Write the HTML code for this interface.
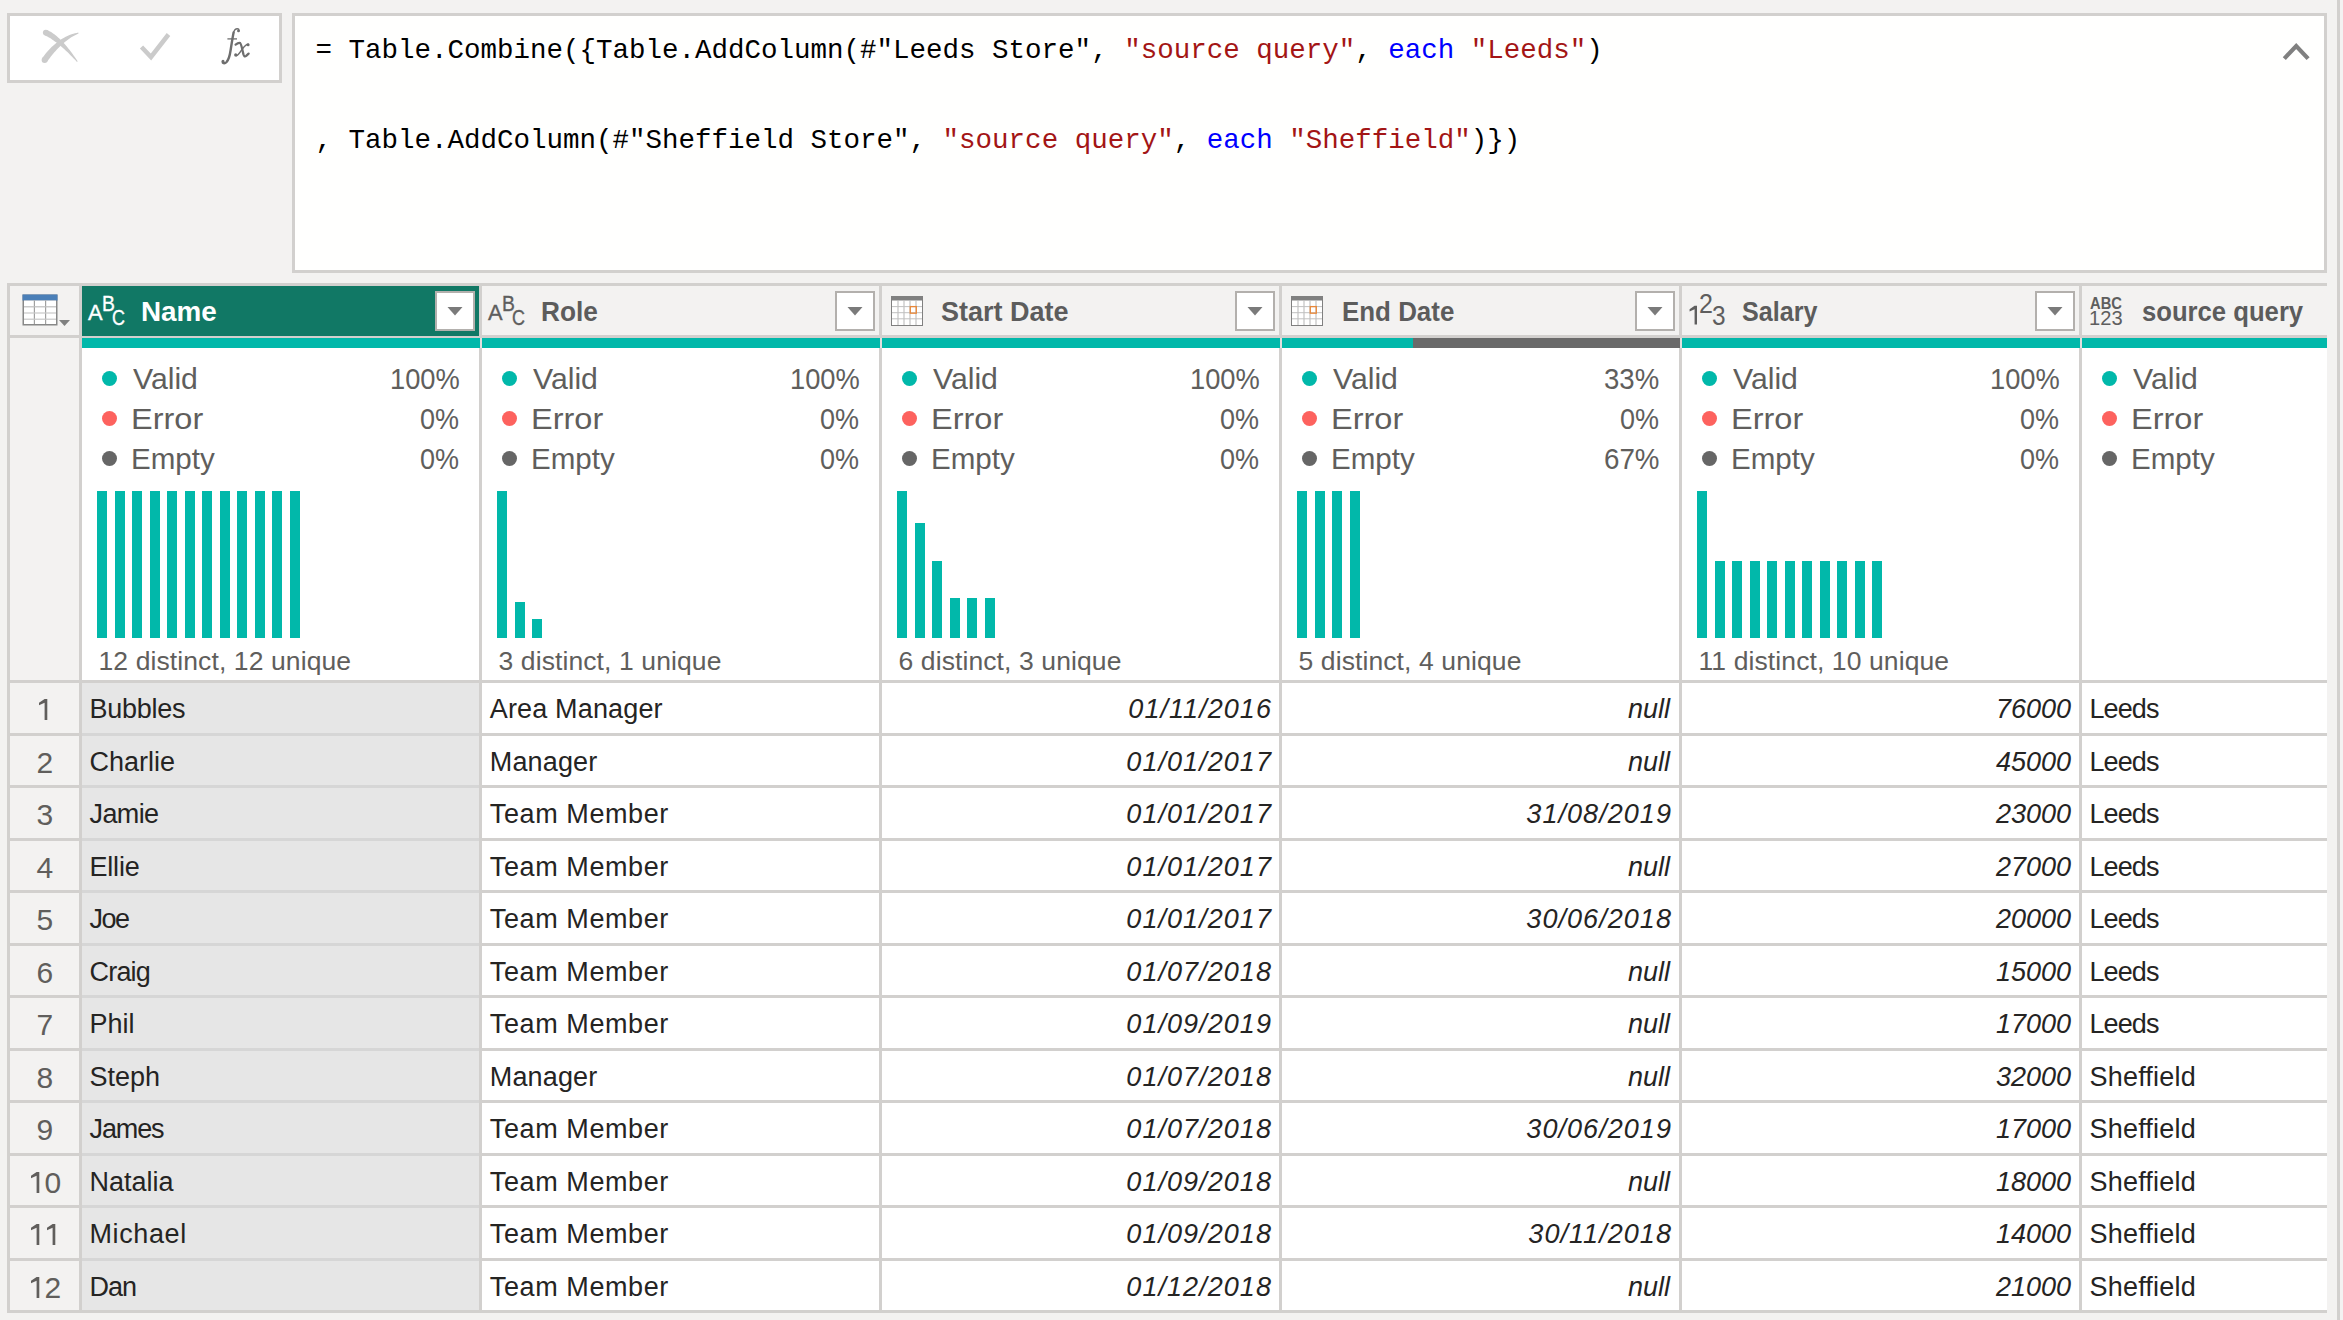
<!DOCTYPE html>
<html><head><meta charset="utf-8">
<style>
html,body{margin:0;padding:0;}
body{width:2343px;height:1320px;background:#f3f2f1;position:relative;overflow:hidden;font-family:'Liberation Sans', sans-serif;}
body div, body span, body svg{position:absolute;}
span{line-height:0;white-space:pre;}
i{font-style:normal;}
</style></head><body>
<div style="left:7px;top:13px;width:269px;height:64px;border:3px solid #d2d0ce;background:#fff;"></div>
<svg style="left:0;top:0" width="100" height="80" viewBox="0 0 100 80"><path d="M44.64 35.26 L45.66 35.72 L46.70 36.24 L47.78 36.80 L48.88 37.43 L50.02 38.11 L51.18 38.84 L52.38 39.63 L53.60 40.48 L54.85 41.38 L56.13 42.34 L57.44 43.36 L58.78 44.43 L60.14 45.57 L61.53 46.76 L62.95 48.01 L64.40 49.32 L65.87 50.68 L67.38 52.11 L68.90 53.59 L70.46 55.13 L72.04 56.73 L73.65 58.39 L75.28 60.10 L76.95 61.88 L77.65 61.32 L76.30 59.29 L74.95 57.32 L73.61 55.41 L72.28 53.57 L70.95 51.79 L69.64 50.07 L68.33 48.41 L67.02 46.82 L65.73 45.29 L64.44 43.82 L63.15 42.41 L61.87 41.07 L60.60 39.79 L59.34 38.57 L58.08 37.42 L56.82 36.32 L55.57 35.30 L54.33 34.34 L53.09 33.44 L51.86 32.61 L50.62 31.84 L49.40 31.14 L48.18 30.51 L46.96 29.94Z" fill="#cbcbcb"/><circle cx="45.8" cy="32.6" r="2.9" fill="#cbcbcb"/><path d="M78.27 32.57 L76.61 32.90 L74.96 33.29 L73.32 33.75 L71.68 34.27 L70.05 34.86 L68.44 35.52 L66.83 36.25 L65.23 37.04 L63.65 37.89 L62.09 38.82 L60.54 39.80 L59.00 40.85 L57.48 41.97 L55.98 43.15 L54.51 44.39 L53.05 45.69 L51.61 47.05 L50.19 48.48 L48.79 49.96 L47.42 51.51 L46.07 53.11 L44.74 54.78 L43.43 56.50 L42.15 58.27 L47.05 61.73 L48.26 60.04 L49.47 58.40 L50.69 56.81 L51.91 55.27 L53.14 53.77 L54.37 52.32 L55.62 50.91 L56.87 49.55 L58.12 48.24 L59.39 46.96 L60.66 45.73 L61.95 44.55 L63.25 43.40 L64.55 42.29 L65.88 41.23 L67.21 40.21 L68.56 39.22 L69.93 38.28 L71.31 37.37 L72.71 36.50 L74.13 35.68 L75.58 34.89 L77.04 34.14 L78.53 33.43Z" fill="#cbcbcb"/><circle cx="44.6" cy="60.0" r="3.0" fill="#cbcbcb"/></svg>
<svg style="left:138px;top:30px" width="36" height="32" viewBox="0 0 36 32">
<path d="M3.5 17 L13 27 L30.5 4.5" stroke="#cbcbcb" stroke-width="4.5" fill="none"/>
</svg>
<svg style="left:210px;top:20px" width="50" height="50" viewBox="210 20 50 50" fill="none" stroke="#6e6e6e" stroke-linecap="round">
<path d="M233.6 32.5 C232.8 36, 231.6 44, 230.6 50.3 C229.9 55, 228.9 59.5, 226.6 62 C225.3 63.3, 223.9 63.5, 222.9 62.8" stroke-width="2.4"/>
<path d="M233.6 32.5 C234.3 30, 235.6 28.7, 237.3 28.7 C238.3 28.7, 239 29.3, 239 30.3" stroke-width="1.4"/>
<circle cx="238.5" cy="30.9" r="1.45" fill="#6e6e6e" stroke="none"/>
<circle cx="223" cy="61.4" r="1.55" fill="#6e6e6e" stroke="none"/>
<path d="M227.4 38.9 L237.0 38.9" stroke-width="1.3" stroke-linecap="butt"/>
<path d="M235.6 44.6 C237.3 43.3, 239.3 42.6, 240.2 43.1 C241 43.7, 242.5 50, 243.4 54.3 C243.9 56.2, 244.8 56.9, 246.2 55.9 L248.6 53.6" stroke-width="2.3"/>
<path d="M248.2 44.3 C246.4 44.3, 244.4 46.1, 241.9 49.6 C239.9 52.6, 238 55.4, 236.2 55.8" stroke-width="1.5"/>
<circle cx="248.1" cy="44.7" r="1.5" fill="#6e6e6e" stroke="none"/>
<circle cx="235.7" cy="54.9" r="1.6" fill="#6e6e6e" stroke="none"/>
</svg>
<div style="left:292px;top:13px;width:2029px;height:254px;border:3px solid #d2d0ce;background:#fffffe;"></div>
<svg style="left:2280px;top:38px" width="32" height="26" viewBox="0 0 32 26">
<path d="M4.3 20.6 L16.2 8 L28.1 20.6" stroke="#808080" stroke-width="4.2" fill="none"/>
</svg>
<div style="left:2337px;top:0px;width:3px;height:1320px;background:#d2d0ce;"></div>
<span style="left:315.5px;top:50.68px;font-size:27.5px;font-family:'Liberation Mono', monospace;"><i style="color:#000000">= Table.Combine({Table.AddColumn(#&quot;Leeds Store&quot;, </i><i style="color:#a31515">&quot;source query&quot;</i><i style="color:#000000">, </i><i style="color:#0000ff">each</i><i style="color:#000000"> </i><i style="color:#a31515">&quot;Leeds&quot;</i><i style="color:#000000">)</i></span>
<span style="left:315.5px;top:140.68px;font-size:27.5px;font-family:'Liberation Mono', monospace;"><i style="color:#000000">, Table.AddColumn(#&quot;Sheffield Store&quot;, </i><i style="color:#a31515">&quot;source query&quot;</i><i style="color:#000000">, </i><i style="color:#0000ff">each</i><i style="color:#000000"> </i><i style="color:#a31515">&quot;Sheffield&quot;</i><i style="color:#000000">)})</i></span>
<div style="left:7px;top:283px;width:2320px;height:3px;background:#d2d0ce;"></div>
<div style="left:7px;top:283px;width:3px;height:1030px;background:#d2d0ce;"></div>
<div style="left:7px;top:1310px;width:2320px;height:3px;background:#d2d0ce;"></div>
<div style="left:10px;top:286px;width:69px;height:49px;background:#f3f2f1;"></div>
<div style="left:10px;top:338px;width:69px;height:342px;background:#f3f2f1;"></div>
<div style="left:10px;top:335px;width:2317px;height:3px;background:#d2d0ce;"></div>
<div style="left:10px;top:680px;width:2317px;height:3px;background:#d2d0ce;"></div>
<div style="left:79px;top:286px;width:3px;height:1024px;background:#d2d0ce;"></div>
<div style="left:479px;top:286px;width:3px;height:1024px;background:#d2d0ce;"></div>
<div style="left:879px;top:286px;width:3px;height:1024px;background:#d2d0ce;"></div>
<div style="left:1279px;top:286px;width:3px;height:1024px;background:#d2d0ce;"></div>
<div style="left:1679px;top:286px;width:3px;height:1024px;background:#d2d0ce;"></div>
<div style="left:2079px;top:286px;width:3px;height:1024px;background:#d2d0ce;"></div>
<div style="left:82px;top:286px;width:397px;height:50px;background:#117865;"></div>
<span style="left:88.35px;top:312.98px;font-size:22.25px;color:#ffffff;font-weight:normal;font-style:normal;font-family:'Liberation Sans', sans-serif;transform:scaleX(0.9835);transform-origin:0 0;-webkit-text-stroke:0.35px">A</span>
<span style="left:102.00px;top:303.73px;font-size:22.11px;color:#ffffff;font-weight:normal;font-style:normal;font-family:'Liberation Sans', sans-serif;transform:scaleX(0.8749);transform-origin:0 0;-webkit-text-stroke:0.35px">B</span>
<span style="left:112.00px;top:317.79px;font-size:21.63px;color:#ffffff;font-weight:normal;font-style:normal;font-family:'Liberation Sans', sans-serif;transform:scaleX(0.8302);transform-origin:0 0;-webkit-text-stroke:0.35px">C</span>
<span style="left:140.62px;top:312.14px;font-size:27px;color:#ffffff;font-weight:bold;font-style:normal;font-family:'Liberation Sans', sans-serif;transform:scaleX(1.0310);transform-origin:0 0;">Name</span>
<div style="left:435px;top:291px;width:36px;height:36px;border:2px solid #b3b0ad;background:#fff;"></div>
<svg style="left:447px;top:306px" width="16" height="10" viewBox="0 0 16 10"><path d="M0.5 1 L15.5 1 L8 9.5 Z" fill="#7a7a7a"/></svg>
<div style="left:82px;top:338px;width:397px;height:10px;background:#01b8aa;"></div>
<div style="left:82px;top:348px;width:397px;height:332px;background:#ffffff;"></div>
<div style="left:482px;top:286px;width:397px;height:49px;background:#f3f2f1;"></div>
<span style="left:488.35px;top:312.98px;font-size:22.25px;color:#5e5e5e;font-weight:normal;font-style:normal;font-family:'Liberation Sans', sans-serif;transform:scaleX(0.9835);transform-origin:0 0;-webkit-text-stroke:0.35px">A</span>
<span style="left:502.00px;top:303.73px;font-size:22.11px;color:#5e5e5e;font-weight:normal;font-style:normal;font-family:'Liberation Sans', sans-serif;transform:scaleX(0.8749);transform-origin:0 0;-webkit-text-stroke:0.35px">B</span>
<span style="left:512.00px;top:317.79px;font-size:21.63px;color:#5e5e5e;font-weight:normal;font-style:normal;font-family:'Liberation Sans', sans-serif;transform:scaleX(0.8302);transform-origin:0 0;-webkit-text-stroke:0.35px">C</span>
<span style="left:540.83px;top:312.14px;font-size:27px;color:#5c5c5c;font-weight:bold;font-style:normal;font-family:'Liberation Sans', sans-serif;transform:scaleX(0.9721);transform-origin:0 0;">Role</span>
<div style="left:835px;top:291px;width:36px;height:36px;border:2px solid #b3b0ad;background:#fff;"></div>
<svg style="left:847px;top:306px" width="16" height="10" viewBox="0 0 16 10"><path d="M0.5 1 L15.5 1 L8 9.5 Z" fill="#7a7a7a"/></svg>
<div style="left:482px;top:338px;width:397px;height:10px;background:#01b8aa;"></div>
<div style="left:482px;top:348px;width:397px;height:332px;background:#ffffff;"></div>
<div style="left:882px;top:286px;width:397px;height:49px;background:#f3f2f1;"></div>
<svg style="left:891px;top:296px" width="32" height="30" viewBox="0 0 32 30"><rect x="0" y="0" width="32" height="30" fill="#808080"/><rect x="1" y="4.5" width="30" height="24.5" fill="#ffffff"/><rect x="6.5" y="4.5" width="1" height="24.5" fill="#b8b8b8"/><rect x="12.5" y="4.5" width="1" height="24.5" fill="#b8b8b8"/><rect x="18.5" y="4.5" width="1" height="24.5" fill="#b8b8b8"/><rect x="24.5" y="4.5" width="1" height="24.5" fill="#b8b8b8"/><rect x="1" y="10.1" width="30" height="1" fill="#c0c0c0"/><rect x="1" y="16.2" width="30" height="1" fill="#c0c0c0"/><rect x="1" y="22.3" width="30" height="1" fill="#c0c0c0"/><rect x="19.3" y="10.6" width="6" height="6.6" fill="none" stroke="#e8883a" stroke-width="1.3"/></svg>
<span style="left:941.39px;top:312.14px;font-size:27px;color:#5c5c5c;font-weight:bold;font-style:normal;font-family:'Liberation Sans', sans-serif;transform:scaleX(0.9998);transform-origin:0 0;">Start Date</span>
<div style="left:1235px;top:291px;width:36px;height:36px;border:2px solid #b3b0ad;background:#fff;"></div>
<svg style="left:1247px;top:306px" width="16" height="10" viewBox="0 0 16 10"><path d="M0.5 1 L15.5 1 L8 9.5 Z" fill="#7a7a7a"/></svg>
<div style="left:882px;top:338px;width:397px;height:10px;background:#01b8aa;"></div>
<div style="left:882px;top:348px;width:397px;height:332px;background:#ffffff;"></div>
<div style="left:1282px;top:286px;width:397px;height:49px;background:#f3f2f1;"></div>
<svg style="left:1291px;top:296px" width="32" height="30" viewBox="0 0 32 30"><rect x="0" y="0" width="32" height="30" fill="#808080"/><rect x="1" y="4.5" width="30" height="24.5" fill="#ffffff"/><rect x="6.5" y="4.5" width="1" height="24.5" fill="#b8b8b8"/><rect x="12.5" y="4.5" width="1" height="24.5" fill="#b8b8b8"/><rect x="18.5" y="4.5" width="1" height="24.5" fill="#b8b8b8"/><rect x="24.5" y="4.5" width="1" height="24.5" fill="#b8b8b8"/><rect x="1" y="10.1" width="30" height="1" fill="#c0c0c0"/><rect x="1" y="16.2" width="30" height="1" fill="#c0c0c0"/><rect x="1" y="22.3" width="30" height="1" fill="#c0c0c0"/><rect x="19.3" y="10.6" width="6" height="6.6" fill="none" stroke="#e8883a" stroke-width="1.3"/></svg>
<span style="left:1342.15px;top:312.14px;font-size:27px;color:#5c5c5c;font-weight:bold;font-style:normal;font-family:'Liberation Sans', sans-serif;transform:scaleX(0.9599);transform-origin:0 0;">End Date</span>
<div style="left:1635px;top:291px;width:36px;height:36px;border:2px solid #b3b0ad;background:#fff;"></div>
<svg style="left:1647px;top:306px" width="16" height="10" viewBox="0 0 16 10"><path d="M0.5 1 L15.5 1 L8 9.5 Z" fill="#7a7a7a"/></svg>
<div style="left:1282px;top:338px;width:131px;height:10px;background:#01b8aa;"></div>
<div style="left:1413px;top:338px;width:266px;height:10px;background:#6a6a6a;"></div>
<div style="left:1282px;top:348px;width:397px;height:332px;background:#ffffff;"></div>
<div style="left:1682px;top:286px;width:397px;height:49px;background:#f3f2f1;"></div>
<svg style="left:0;top:0" width="2343" height="340" viewBox="0 0 2343 340"><path d="M1694.58 305.80 L1697.00 305.80 L1697.00 324.60 L1694.58 324.60 L1694.58 309.20 L1689.57 311.44 L1689.57 309.20Z" fill="#5e5e5e"/></svg>
<span style="left:1699.35px;top:303.96px;font-size:27.24px;color:#5e5e5e;font-weight:normal;font-style:normal;font-family:'Liberation Sans', sans-serif;transform:scaleX(0.9198);transform-origin:0 0;">2</span>
<span style="left:1712.48px;top:316.42px;font-size:26.86px;color:#5e5e5e;font-weight:normal;font-style:normal;font-family:'Liberation Sans', sans-serif;transform:scaleX(0.9094);transform-origin:0 0;">3</span>
<span style="left:1741.95px;top:312.14px;font-size:27px;color:#5c5c5c;font-weight:bold;font-style:normal;font-family:'Liberation Sans', sans-serif;transform:scaleX(0.9298);transform-origin:0 0;">Salary</span>
<div style="left:2035px;top:291px;width:36px;height:36px;border:2px solid #b3b0ad;background:#fff;"></div>
<svg style="left:2047px;top:306px" width="16" height="10" viewBox="0 0 16 10"><path d="M0.5 1 L15.5 1 L8 9.5 Z" fill="#7a7a7a"/></svg>
<div style="left:1682px;top:338px;width:397px;height:10px;background:#01b8aa;"></div>
<div style="left:1682px;top:348px;width:397px;height:332px;background:#ffffff;"></div>
<div style="left:2082px;top:286px;width:245px;height:49px;background:#f3f2f1;"></div>
<span style="left:2090.43px;top:302.65px;font-size:16.11px;color:#5e5e5e;font-weight:bold;font-style:normal;font-family:'Liberation Sans', sans-serif;transform:scaleX(0.9155);transform-origin:0 0;">ABC</span>
<span style="left:2089.29px;top:317.69px;font-size:19.65px;color:#5e5e5e;font-weight:normal;font-style:normal;font-family:'Liberation Sans', sans-serif;transform:scaleX(1.0246);transform-origin:0 0;">123</span>
<span style="left:2141.80px;top:312.14px;font-size:27px;color:#5c5c5c;font-weight:bold;font-style:normal;font-family:'Liberation Sans', sans-serif;transform:scaleX(0.9503);transform-origin:0 0;">source query</span>
<div style="left:2082px;top:338px;width:245px;height:10px;background:#01b8aa;"></div>
<div style="left:2082px;top:348px;width:245px;height:332px;background:#ffffff;"></div>
<div style="left:479px;top:348px;width:3px;height:332px;background:#d2d0ce;"></div>
<div style="left:479px;top:338px;width:1px;height:10px;background:#01b8aa;"></div>
<div style="left:480px;top:338px;width:2px;height:10px;background:#e2dede;"></div>
<div style="left:879px;top:348px;width:3px;height:332px;background:#d2d0ce;"></div>
<div style="left:879px;top:338px;width:1px;height:10px;background:#01b8aa;"></div>
<div style="left:880px;top:338px;width:2px;height:10px;background:#e2dede;"></div>
<div style="left:1279px;top:348px;width:3px;height:332px;background:#d2d0ce;"></div>
<div style="left:1279px;top:338px;width:1px;height:10px;background:#01b8aa;"></div>
<div style="left:1280px;top:338px;width:2px;height:10px;background:#e2dede;"></div>
<div style="left:1679px;top:348px;width:3px;height:332px;background:#d2d0ce;"></div>
<div style="left:1679px;top:338px;width:1px;height:10px;background:#6a6a6a;"></div>
<div style="left:1680px;top:338px;width:2px;height:10px;background:#e2dede;"></div>
<div style="left:2079px;top:348px;width:3px;height:332px;background:#d2d0ce;"></div>
<div style="left:2079px;top:338px;width:1px;height:10px;background:#01b8aa;"></div>
<div style="left:2080px;top:338px;width:2px;height:10px;background:#e2dede;"></div>
<svg style="left:22px;top:294px" width="50" height="34" viewBox="0 0 50 34">
<rect x="0.5" y="0.5" width="35" height="31" fill="#888888"/>
<rect x="0.5" y="0.5" width="35" height="6" fill="#4a7fb8"/>
<rect x="2" y="6.5" width="32" height="23.5" fill="#ffffff"/>
<rect x="11.8" y="6.5" width="1.2" height="23.5" fill="#a0a0a0"/>
<rect x="23" y="6.5" width="1.2" height="23.5" fill="#a0a0a0"/>
<rect x="2" y="12.2" width="32" height="1.2" fill="#bdbdbd"/>
<rect x="2" y="18.4" width="32" height="1.2" fill="#c8c8c8"/>
<rect x="2" y="24.6" width="32" height="1.2" fill="#c8c8c8"/>
<path d="M37 26 L48 26 L42.5 32 Z" fill="#808080"/>
</svg>
<div style="left:102px;top:371.0px;width:15px;height:15px;border-radius:50%;background:#01b8aa;"></div>
<span style="left:132.65px;top:378.67px;font-size:29.8px;color:#605e5c;font-weight:normal;font-style:normal;font-family:'Liberation Sans', sans-serif;transform:scaleX(1.0132);transform-origin:0 0;">Valid</span>
<span style="left:389.55px;top:378.67px;font-size:29.8px;color:#605e5c;font-weight:normal;font-style:normal;font-family:'Liberation Sans', sans-serif;transform:scaleX(0.9159);transform-origin:0 0;">100%</span>
<div style="left:102px;top:411.0px;width:15px;height:15px;border-radius:50%;background:#fd625e;"></div>
<span style="left:130.82px;top:418.67px;font-size:29.8px;color:#605e5c;font-weight:normal;font-style:normal;font-family:'Liberation Sans', sans-serif;transform:scaleX(1.0912);transform-origin:0 0;">Error</span>
<span style="left:420.32px;top:418.67px;font-size:29.8px;color:#605e5c;font-weight:normal;font-style:normal;font-family:'Liberation Sans', sans-serif;transform:scaleX(0.9063);transform-origin:0 0;">0%</span>
<div style="left:102px;top:451.0px;width:15px;height:15px;border-radius:50%;background:#666666;"></div>
<span style="left:131.06px;top:458.67px;font-size:29.8px;color:#605e5c;font-weight:normal;font-style:normal;font-family:'Liberation Sans', sans-serif;transform:scaleX(0.9921);transform-origin:0 0;">Empty</span>
<span style="left:420.32px;top:458.67px;font-size:29.8px;color:#605e5c;font-weight:normal;font-style:normal;font-family:'Liberation Sans', sans-serif;transform:scaleX(0.9063);transform-origin:0 0;">0%</span>
<div style="left:97.0px;top:491px;width:10px;height:147px;background:#01b8aa;"></div>
<div style="left:114.5px;top:491px;width:10px;height:147px;background:#01b8aa;"></div>
<div style="left:132.0px;top:491px;width:10px;height:147px;background:#01b8aa;"></div>
<div style="left:149.5px;top:491px;width:10px;height:147px;background:#01b8aa;"></div>
<div style="left:167.0px;top:491px;width:10px;height:147px;background:#01b8aa;"></div>
<div style="left:184.5px;top:491px;width:10px;height:147px;background:#01b8aa;"></div>
<div style="left:202.0px;top:491px;width:10px;height:147px;background:#01b8aa;"></div>
<div style="left:219.5px;top:491px;width:10px;height:147px;background:#01b8aa;"></div>
<div style="left:237.0px;top:491px;width:10px;height:147px;background:#01b8aa;"></div>
<div style="left:254.5px;top:491px;width:10px;height:147px;background:#01b8aa;"></div>
<div style="left:272.0px;top:491px;width:10px;height:147px;background:#01b8aa;"></div>
<div style="left:289.5px;top:491px;width:10px;height:147px;background:#01b8aa;"></div>
<span style="left:98.5px;top:660.81px;font-size:26.5px;color:#605e5c;font-weight:normal;font-style:normal;font-family:'Liberation Sans', sans-serif;letter-spacing:0.1px">12 distinct, 12 unique</span>
<div style="left:502px;top:371.0px;width:15px;height:15px;border-radius:50%;background:#01b8aa;"></div>
<span style="left:532.65px;top:378.67px;font-size:29.8px;color:#605e5c;font-weight:normal;font-style:normal;font-family:'Liberation Sans', sans-serif;transform:scaleX(1.0132);transform-origin:0 0;">Valid</span>
<span style="left:789.55px;top:378.67px;font-size:29.8px;color:#605e5c;font-weight:normal;font-style:normal;font-family:'Liberation Sans', sans-serif;transform:scaleX(0.9159);transform-origin:0 0;">100%</span>
<div style="left:502px;top:411.0px;width:15px;height:15px;border-radius:50%;background:#fd625e;"></div>
<span style="left:530.82px;top:418.67px;font-size:29.8px;color:#605e5c;font-weight:normal;font-style:normal;font-family:'Liberation Sans', sans-serif;transform:scaleX(1.0912);transform-origin:0 0;">Error</span>
<span style="left:820.32px;top:418.67px;font-size:29.8px;color:#605e5c;font-weight:normal;font-style:normal;font-family:'Liberation Sans', sans-serif;transform:scaleX(0.9063);transform-origin:0 0;">0%</span>
<div style="left:502px;top:451.0px;width:15px;height:15px;border-radius:50%;background:#666666;"></div>
<span style="left:531.06px;top:458.67px;font-size:29.8px;color:#605e5c;font-weight:normal;font-style:normal;font-family:'Liberation Sans', sans-serif;transform:scaleX(0.9921);transform-origin:0 0;">Empty</span>
<span style="left:820.32px;top:458.67px;font-size:29.8px;color:#605e5c;font-weight:normal;font-style:normal;font-family:'Liberation Sans', sans-serif;transform:scaleX(0.9063);transform-origin:0 0;">0%</span>
<div style="left:497.0px;top:491px;width:10px;height:147px;background:#01b8aa;"></div>
<div style="left:514.5px;top:602px;width:10px;height:36px;background:#01b8aa;"></div>
<div style="left:532.0px;top:619px;width:10px;height:19px;background:#01b8aa;"></div>
<span style="left:498.5px;top:660.81px;font-size:26.5px;color:#605e5c;font-weight:normal;font-style:normal;font-family:'Liberation Sans', sans-serif;letter-spacing:0.1px">3 distinct, 1 unique</span>
<div style="left:902px;top:371.0px;width:15px;height:15px;border-radius:50%;background:#01b8aa;"></div>
<span style="left:932.65px;top:378.67px;font-size:29.8px;color:#605e5c;font-weight:normal;font-style:normal;font-family:'Liberation Sans', sans-serif;transform:scaleX(1.0132);transform-origin:0 0;">Valid</span>
<span style="left:1189.55px;top:378.67px;font-size:29.8px;color:#605e5c;font-weight:normal;font-style:normal;font-family:'Liberation Sans', sans-serif;transform:scaleX(0.9159);transform-origin:0 0;">100%</span>
<div style="left:902px;top:411.0px;width:15px;height:15px;border-radius:50%;background:#fd625e;"></div>
<span style="left:930.82px;top:418.67px;font-size:29.8px;color:#605e5c;font-weight:normal;font-style:normal;font-family:'Liberation Sans', sans-serif;transform:scaleX(1.0912);transform-origin:0 0;">Error</span>
<span style="left:1220.32px;top:418.67px;font-size:29.8px;color:#605e5c;font-weight:normal;font-style:normal;font-family:'Liberation Sans', sans-serif;transform:scaleX(0.9063);transform-origin:0 0;">0%</span>
<div style="left:902px;top:451.0px;width:15px;height:15px;border-radius:50%;background:#666666;"></div>
<span style="left:931.06px;top:458.67px;font-size:29.8px;color:#605e5c;font-weight:normal;font-style:normal;font-family:'Liberation Sans', sans-serif;transform:scaleX(0.9921);transform-origin:0 0;">Empty</span>
<span style="left:1220.32px;top:458.67px;font-size:29.8px;color:#605e5c;font-weight:normal;font-style:normal;font-family:'Liberation Sans', sans-serif;transform:scaleX(0.9063);transform-origin:0 0;">0%</span>
<div style="left:897.0px;top:491px;width:10px;height:147px;background:#01b8aa;"></div>
<div style="left:914.5px;top:523px;width:10px;height:115px;background:#01b8aa;"></div>
<div style="left:932.0px;top:561px;width:10px;height:77px;background:#01b8aa;"></div>
<div style="left:949.5px;top:598px;width:10px;height:40px;background:#01b8aa;"></div>
<div style="left:967.0px;top:598px;width:10px;height:40px;background:#01b8aa;"></div>
<div style="left:984.5px;top:598px;width:10px;height:40px;background:#01b8aa;"></div>
<span style="left:898.5px;top:660.81px;font-size:26.5px;color:#605e5c;font-weight:normal;font-style:normal;font-family:'Liberation Sans', sans-serif;letter-spacing:0.1px">6 distinct, 3 unique</span>
<div style="left:1302px;top:371.0px;width:15px;height:15px;border-radius:50%;background:#01b8aa;"></div>
<span style="left:1332.65px;top:378.67px;font-size:29.8px;color:#605e5c;font-weight:normal;font-style:normal;font-family:'Liberation Sans', sans-serif;transform:scaleX(1.0132);transform-origin:0 0;">Valid</span>
<span style="left:1604.17px;top:378.67px;font-size:29.8px;color:#605e5c;font-weight:normal;font-style:normal;font-family:'Liberation Sans', sans-serif;transform:scaleX(0.9250);transform-origin:0 0;">33%</span>
<div style="left:1302px;top:411.0px;width:15px;height:15px;border-radius:50%;background:#fd625e;"></div>
<span style="left:1330.82px;top:418.67px;font-size:29.8px;color:#605e5c;font-weight:normal;font-style:normal;font-family:'Liberation Sans', sans-serif;transform:scaleX(1.0912);transform-origin:0 0;">Error</span>
<span style="left:1620.32px;top:418.67px;font-size:29.8px;color:#605e5c;font-weight:normal;font-style:normal;font-family:'Liberation Sans', sans-serif;transform:scaleX(0.9063);transform-origin:0 0;">0%</span>
<div style="left:1302px;top:451.0px;width:15px;height:15px;border-radius:50%;background:#666666;"></div>
<span style="left:1331.06px;top:458.67px;font-size:29.8px;color:#605e5c;font-weight:normal;font-style:normal;font-family:'Liberation Sans', sans-serif;transform:scaleX(0.9921);transform-origin:0 0;">Empty</span>
<span style="left:1603.81px;top:458.67px;font-size:29.8px;color:#605e5c;font-weight:normal;font-style:normal;font-family:'Liberation Sans', sans-serif;transform:scaleX(0.9310);transform-origin:0 0;">67%</span>
<div style="left:1297.0px;top:491px;width:10px;height:147px;background:#01b8aa;"></div>
<div style="left:1314.5px;top:491px;width:10px;height:147px;background:#01b8aa;"></div>
<div style="left:1332.0px;top:491px;width:10px;height:147px;background:#01b8aa;"></div>
<div style="left:1349.5px;top:491px;width:10px;height:147px;background:#01b8aa;"></div>
<span style="left:1298.5px;top:660.81px;font-size:26.5px;color:#605e5c;font-weight:normal;font-style:normal;font-family:'Liberation Sans', sans-serif;letter-spacing:0.1px">5 distinct, 4 unique</span>
<div style="left:1702px;top:371.0px;width:15px;height:15px;border-radius:50%;background:#01b8aa;"></div>
<span style="left:1732.65px;top:378.67px;font-size:29.8px;color:#605e5c;font-weight:normal;font-style:normal;font-family:'Liberation Sans', sans-serif;transform:scaleX(1.0132);transform-origin:0 0;">Valid</span>
<span style="left:1989.55px;top:378.67px;font-size:29.8px;color:#605e5c;font-weight:normal;font-style:normal;font-family:'Liberation Sans', sans-serif;transform:scaleX(0.9159);transform-origin:0 0;">100%</span>
<div style="left:1702px;top:411.0px;width:15px;height:15px;border-radius:50%;background:#fd625e;"></div>
<span style="left:1730.82px;top:418.67px;font-size:29.8px;color:#605e5c;font-weight:normal;font-style:normal;font-family:'Liberation Sans', sans-serif;transform:scaleX(1.0912);transform-origin:0 0;">Error</span>
<span style="left:2020.32px;top:418.67px;font-size:29.8px;color:#605e5c;font-weight:normal;font-style:normal;font-family:'Liberation Sans', sans-serif;transform:scaleX(0.9063);transform-origin:0 0;">0%</span>
<div style="left:1702px;top:451.0px;width:15px;height:15px;border-radius:50%;background:#666666;"></div>
<span style="left:1731.06px;top:458.67px;font-size:29.8px;color:#605e5c;font-weight:normal;font-style:normal;font-family:'Liberation Sans', sans-serif;transform:scaleX(0.9921);transform-origin:0 0;">Empty</span>
<span style="left:2020.32px;top:458.67px;font-size:29.8px;color:#605e5c;font-weight:normal;font-style:normal;font-family:'Liberation Sans', sans-serif;transform:scaleX(0.9063);transform-origin:0 0;">0%</span>
<div style="left:1697.0px;top:491px;width:10px;height:147px;background:#01b8aa;"></div>
<div style="left:1714.5px;top:561px;width:10px;height:77px;background:#01b8aa;"></div>
<div style="left:1732.0px;top:561px;width:10px;height:77px;background:#01b8aa;"></div>
<div style="left:1749.5px;top:561px;width:10px;height:77px;background:#01b8aa;"></div>
<div style="left:1767.0px;top:561px;width:10px;height:77px;background:#01b8aa;"></div>
<div style="left:1784.5px;top:561px;width:10px;height:77px;background:#01b8aa;"></div>
<div style="left:1802.0px;top:561px;width:10px;height:77px;background:#01b8aa;"></div>
<div style="left:1819.5px;top:561px;width:10px;height:77px;background:#01b8aa;"></div>
<div style="left:1837.0px;top:561px;width:10px;height:77px;background:#01b8aa;"></div>
<div style="left:1854.5px;top:561px;width:10px;height:77px;background:#01b8aa;"></div>
<div style="left:1872.0px;top:561px;width:10px;height:77px;background:#01b8aa;"></div>
<span style="left:1698.5px;top:660.81px;font-size:26.5px;color:#605e5c;font-weight:normal;font-style:normal;font-family:'Liberation Sans', sans-serif;letter-spacing:0.1px">11 distinct, 10 unique</span>
<div style="left:2102px;top:371.0px;width:15px;height:15px;border-radius:50%;background:#01b8aa;"></div>
<span style="left:2132.65px;top:378.67px;font-size:29.8px;color:#605e5c;font-weight:normal;font-style:normal;font-family:'Liberation Sans', sans-serif;transform:scaleX(1.0132);transform-origin:0 0;">Valid</span>
<div style="left:2102px;top:411.0px;width:15px;height:15px;border-radius:50%;background:#fd625e;"></div>
<span style="left:2130.82px;top:418.67px;font-size:29.8px;color:#605e5c;font-weight:normal;font-style:normal;font-family:'Liberation Sans', sans-serif;transform:scaleX(1.0912);transform-origin:0 0;">Error</span>
<div style="left:2102px;top:451.0px;width:15px;height:15px;border-radius:50%;background:#666666;"></div>
<span style="left:2131.06px;top:458.67px;font-size:29.8px;color:#605e5c;font-weight:normal;font-style:normal;font-family:'Liberation Sans', sans-serif;transform:scaleX(0.9921);transform-origin:0 0;">Empty</span>
<div style="left:10px;top:683px;width:69px;height:50px;background:#f3f2f1;"></div>
<div style="left:82px;top:683px;width:397px;height:50px;background:#e6e6e6;"></div>
<div style="left:482px;top:683px;width:397px;height:50px;background:#ffffff;"></div>
<div style="left:882px;top:683px;width:397px;height:50px;background:#ffffff;"></div>
<div style="left:1282px;top:683px;width:397px;height:50px;background:#ffffff;"></div>
<div style="left:1682px;top:683px;width:397px;height:50px;background:#ffffff;"></div>
<div style="left:2082px;top:683px;width:245px;height:50px;background:#ffffff;"></div>
<div style="left:10px;top:733px;width:2317px;height:3px;background:#d2d0ce;"></div>
<div style="left:82px;top:733px;width:397px;height:3px;background:#d6d6d6;"></div>
<svg style="left:0;top:0" width="80" height="1320" viewBox="0 0 80 1320"><path d="M44.60 698.90 L47.30 698.90 L47.30 719.90 L44.60 719.90 L44.60 702.70 L39.00 705.20 L39.00 702.70Z" fill="#605e5c"/></svg>
<span style="left:89.5px;top:708.94px;font-size:27px;color:#252423;font-weight:normal;font-style:normal;font-family:'Liberation Sans', sans-serif;letter-spacing:-0.25px">Bubbles</span>
<span style="left:489.8px;top:708.94px;font-size:27px;color:#252423;font-weight:normal;font-style:normal;font-family:'Liberation Sans', sans-serif;letter-spacing:0.15px">Area Manager</span>
<span style="right:1071px;top:708.94px;font-size:27px;color:#252423;font-weight:normal;font-style:italic;font-family:'Liberation Sans', sans-serif;letter-spacing:1.05px">01/11/2016</span>
<span style="right:673px;top:708.94px;font-size:27px;color:#252423;font-weight:normal;font-style:italic;font-family:'Liberation Sans', sans-serif;">null</span>
<span style="right:272px;top:708.94px;font-size:27px;color:#252423;font-weight:normal;font-style:italic;font-family:'Liberation Sans', sans-serif;">76000</span>
<span style="left:2089.5px;top:708.94px;font-size:27px;color:#252423;font-weight:normal;font-style:normal;font-family:'Liberation Sans', sans-serif;letter-spacing:-0.9px">Leeds</span>
<div style="left:10px;top:736px;width:69px;height:49px;background:#f3f2f1;"></div>
<div style="left:82px;top:736px;width:397px;height:49px;background:#e6e6e6;"></div>
<div style="left:482px;top:736px;width:397px;height:49px;background:#ffffff;"></div>
<div style="left:882px;top:736px;width:397px;height:49px;background:#ffffff;"></div>
<div style="left:1282px;top:736px;width:397px;height:49px;background:#ffffff;"></div>
<div style="left:1682px;top:736px;width:397px;height:49px;background:#ffffff;"></div>
<div style="left:2082px;top:736px;width:245px;height:49px;background:#ffffff;"></div>
<div style="left:10px;top:785px;width:2317px;height:3px;background:#d2d0ce;"></div>
<div style="left:82px;top:785px;width:397px;height:3px;background:#d6d6d6;"></div>
<span style="left:36.5px;width:16px;text-align:center;top:762.60px;font-size:30px;color:#605e5c;font-family:'Liberation Sans', sans-serif">2</span>
<span style="left:89.5px;top:761.94px;font-size:27px;color:#252423;font-weight:normal;font-style:normal;font-family:'Liberation Sans', sans-serif;letter-spacing:0px">Charlie</span>
<span style="left:489.8px;top:761.94px;font-size:27px;color:#252423;font-weight:normal;font-style:normal;font-family:'Liberation Sans', sans-serif;letter-spacing:0.15px">Manager</span>
<span style="right:1071px;top:761.94px;font-size:27px;color:#252423;font-weight:normal;font-style:italic;font-family:'Liberation Sans', sans-serif;letter-spacing:1.05px">01/01/2017</span>
<span style="right:673px;top:761.94px;font-size:27px;color:#252423;font-weight:normal;font-style:italic;font-family:'Liberation Sans', sans-serif;">null</span>
<span style="right:272px;top:761.94px;font-size:27px;color:#252423;font-weight:normal;font-style:italic;font-family:'Liberation Sans', sans-serif;">45000</span>
<span style="left:2089.5px;top:761.94px;font-size:27px;color:#252423;font-weight:normal;font-style:normal;font-family:'Liberation Sans', sans-serif;letter-spacing:-0.9px">Leeds</span>
<div style="left:10px;top:788px;width:69px;height:50px;background:#f3f2f1;"></div>
<div style="left:82px;top:788px;width:397px;height:50px;background:#e6e6e6;"></div>
<div style="left:482px;top:788px;width:397px;height:50px;background:#ffffff;"></div>
<div style="left:882px;top:788px;width:397px;height:50px;background:#ffffff;"></div>
<div style="left:1282px;top:788px;width:397px;height:50px;background:#ffffff;"></div>
<div style="left:1682px;top:788px;width:397px;height:50px;background:#ffffff;"></div>
<div style="left:2082px;top:788px;width:245px;height:50px;background:#ffffff;"></div>
<div style="left:10px;top:838px;width:2317px;height:3px;background:#d2d0ce;"></div>
<div style="left:82px;top:838px;width:397px;height:3px;background:#d6d6d6;"></div>
<span style="left:36.5px;width:16px;text-align:center;top:814.60px;font-size:30px;color:#605e5c;font-family:'Liberation Sans', sans-serif">3</span>
<span style="left:89.5px;top:813.94px;font-size:27px;color:#252423;font-weight:normal;font-style:normal;font-family:'Liberation Sans', sans-serif;letter-spacing:-0.6px">Jamie</span>
<span style="left:489.8px;top:813.94px;font-size:27px;color:#252423;font-weight:normal;font-style:normal;font-family:'Liberation Sans', sans-serif;letter-spacing:0.6px">Team Member</span>
<span style="right:1071px;top:813.94px;font-size:27px;color:#252423;font-weight:normal;font-style:italic;font-family:'Liberation Sans', sans-serif;letter-spacing:1.05px">01/01/2017</span>
<span style="right:671px;top:813.94px;font-size:27px;color:#252423;font-weight:normal;font-style:italic;font-family:'Liberation Sans', sans-serif;letter-spacing:1.05px">31/08/2019</span>
<span style="right:272px;top:813.94px;font-size:27px;color:#252423;font-weight:normal;font-style:italic;font-family:'Liberation Sans', sans-serif;">23000</span>
<span style="left:2089.5px;top:813.94px;font-size:27px;color:#252423;font-weight:normal;font-style:normal;font-family:'Liberation Sans', sans-serif;letter-spacing:-0.9px">Leeds</span>
<div style="left:10px;top:841px;width:69px;height:49px;background:#f3f2f1;"></div>
<div style="left:82px;top:841px;width:397px;height:49px;background:#e6e6e6;"></div>
<div style="left:482px;top:841px;width:397px;height:49px;background:#ffffff;"></div>
<div style="left:882px;top:841px;width:397px;height:49px;background:#ffffff;"></div>
<div style="left:1282px;top:841px;width:397px;height:49px;background:#ffffff;"></div>
<div style="left:1682px;top:841px;width:397px;height:49px;background:#ffffff;"></div>
<div style="left:2082px;top:841px;width:245px;height:49px;background:#ffffff;"></div>
<div style="left:10px;top:890px;width:2317px;height:3px;background:#d2d0ce;"></div>
<div style="left:82px;top:890px;width:397px;height:3px;background:#d6d6d6;"></div>
<span style="left:36.5px;width:16px;text-align:center;top:867.60px;font-size:30px;color:#605e5c;font-family:'Liberation Sans', sans-serif">4</span>
<span style="left:89.5px;top:866.94px;font-size:27px;color:#252423;font-weight:normal;font-style:normal;font-family:'Liberation Sans', sans-serif;letter-spacing:-0.2px">Ellie</span>
<span style="left:489.8px;top:866.94px;font-size:27px;color:#252423;font-weight:normal;font-style:normal;font-family:'Liberation Sans', sans-serif;letter-spacing:0.6px">Team Member</span>
<span style="right:1071px;top:866.94px;font-size:27px;color:#252423;font-weight:normal;font-style:italic;font-family:'Liberation Sans', sans-serif;letter-spacing:1.05px">01/01/2017</span>
<span style="right:673px;top:866.94px;font-size:27px;color:#252423;font-weight:normal;font-style:italic;font-family:'Liberation Sans', sans-serif;">null</span>
<span style="right:272px;top:866.94px;font-size:27px;color:#252423;font-weight:normal;font-style:italic;font-family:'Liberation Sans', sans-serif;">27000</span>
<span style="left:2089.5px;top:866.94px;font-size:27px;color:#252423;font-weight:normal;font-style:normal;font-family:'Liberation Sans', sans-serif;letter-spacing:-0.9px">Leeds</span>
<div style="left:10px;top:893px;width:69px;height:50px;background:#f3f2f1;"></div>
<div style="left:82px;top:893px;width:397px;height:50px;background:#e6e6e6;"></div>
<div style="left:482px;top:893px;width:397px;height:50px;background:#ffffff;"></div>
<div style="left:882px;top:893px;width:397px;height:50px;background:#ffffff;"></div>
<div style="left:1282px;top:893px;width:397px;height:50px;background:#ffffff;"></div>
<div style="left:1682px;top:893px;width:397px;height:50px;background:#ffffff;"></div>
<div style="left:2082px;top:893px;width:245px;height:50px;background:#ffffff;"></div>
<div style="left:10px;top:943px;width:2317px;height:3px;background:#d2d0ce;"></div>
<div style="left:82px;top:943px;width:397px;height:3px;background:#d6d6d6;"></div>
<span style="left:36.5px;width:16px;text-align:center;top:919.60px;font-size:30px;color:#605e5c;font-family:'Liberation Sans', sans-serif">5</span>
<span style="left:89.5px;top:918.94px;font-size:27px;color:#252423;font-weight:normal;font-style:normal;font-family:'Liberation Sans', sans-serif;letter-spacing:-1.5px">Joe</span>
<span style="left:489.8px;top:918.94px;font-size:27px;color:#252423;font-weight:normal;font-style:normal;font-family:'Liberation Sans', sans-serif;letter-spacing:0.6px">Team Member</span>
<span style="right:1071px;top:918.94px;font-size:27px;color:#252423;font-weight:normal;font-style:italic;font-family:'Liberation Sans', sans-serif;letter-spacing:1.05px">01/01/2017</span>
<span style="right:671px;top:918.94px;font-size:27px;color:#252423;font-weight:normal;font-style:italic;font-family:'Liberation Sans', sans-serif;letter-spacing:1.05px">30/06/2018</span>
<span style="right:272px;top:918.94px;font-size:27px;color:#252423;font-weight:normal;font-style:italic;font-family:'Liberation Sans', sans-serif;">20000</span>
<span style="left:2089.5px;top:918.94px;font-size:27px;color:#252423;font-weight:normal;font-style:normal;font-family:'Liberation Sans', sans-serif;letter-spacing:-0.9px">Leeds</span>
<div style="left:10px;top:946px;width:69px;height:49px;background:#f3f2f1;"></div>
<div style="left:82px;top:946px;width:397px;height:49px;background:#e6e6e6;"></div>
<div style="left:482px;top:946px;width:397px;height:49px;background:#ffffff;"></div>
<div style="left:882px;top:946px;width:397px;height:49px;background:#ffffff;"></div>
<div style="left:1282px;top:946px;width:397px;height:49px;background:#ffffff;"></div>
<div style="left:1682px;top:946px;width:397px;height:49px;background:#ffffff;"></div>
<div style="left:2082px;top:946px;width:245px;height:49px;background:#ffffff;"></div>
<div style="left:10px;top:995px;width:2317px;height:3px;background:#d2d0ce;"></div>
<div style="left:82px;top:995px;width:397px;height:3px;background:#d6d6d6;"></div>
<span style="left:36.5px;width:16px;text-align:center;top:972.60px;font-size:30px;color:#605e5c;font-family:'Liberation Sans', sans-serif">6</span>
<span style="left:89.5px;top:971.94px;font-size:27px;color:#252423;font-weight:normal;font-style:normal;font-family:'Liberation Sans', sans-serif;letter-spacing:-0.8px">Craig</span>
<span style="left:489.8px;top:971.94px;font-size:27px;color:#252423;font-weight:normal;font-style:normal;font-family:'Liberation Sans', sans-serif;letter-spacing:0.6px">Team Member</span>
<span style="right:1071px;top:971.94px;font-size:27px;color:#252423;font-weight:normal;font-style:italic;font-family:'Liberation Sans', sans-serif;letter-spacing:1.05px">01/07/2018</span>
<span style="right:673px;top:971.94px;font-size:27px;color:#252423;font-weight:normal;font-style:italic;font-family:'Liberation Sans', sans-serif;">null</span>
<span style="right:272px;top:971.94px;font-size:27px;color:#252423;font-weight:normal;font-style:italic;font-family:'Liberation Sans', sans-serif;">15000</span>
<span style="left:2089.5px;top:971.94px;font-size:27px;color:#252423;font-weight:normal;font-style:normal;font-family:'Liberation Sans', sans-serif;letter-spacing:-0.9px">Leeds</span>
<div style="left:10px;top:998px;width:69px;height:50px;background:#f3f2f1;"></div>
<div style="left:82px;top:998px;width:397px;height:50px;background:#e6e6e6;"></div>
<div style="left:482px;top:998px;width:397px;height:50px;background:#ffffff;"></div>
<div style="left:882px;top:998px;width:397px;height:50px;background:#ffffff;"></div>
<div style="left:1282px;top:998px;width:397px;height:50px;background:#ffffff;"></div>
<div style="left:1682px;top:998px;width:397px;height:50px;background:#ffffff;"></div>
<div style="left:2082px;top:998px;width:245px;height:50px;background:#ffffff;"></div>
<div style="left:10px;top:1048px;width:2317px;height:3px;background:#d2d0ce;"></div>
<div style="left:82px;top:1048px;width:397px;height:3px;background:#d6d6d6;"></div>
<span style="left:36.5px;width:16px;text-align:center;top:1024.60px;font-size:30px;color:#605e5c;font-family:'Liberation Sans', sans-serif">7</span>
<span style="left:89.5px;top:1023.94px;font-size:27px;color:#252423;font-weight:normal;font-style:normal;font-family:'Liberation Sans', sans-serif;letter-spacing:0px">Phil</span>
<span style="left:489.8px;top:1023.94px;font-size:27px;color:#252423;font-weight:normal;font-style:normal;font-family:'Liberation Sans', sans-serif;letter-spacing:0.6px">Team Member</span>
<span style="right:1071px;top:1023.94px;font-size:27px;color:#252423;font-weight:normal;font-style:italic;font-family:'Liberation Sans', sans-serif;letter-spacing:1.05px">01/09/2019</span>
<span style="right:673px;top:1023.94px;font-size:27px;color:#252423;font-weight:normal;font-style:italic;font-family:'Liberation Sans', sans-serif;">null</span>
<span style="right:272px;top:1023.94px;font-size:27px;color:#252423;font-weight:normal;font-style:italic;font-family:'Liberation Sans', sans-serif;">17000</span>
<span style="left:2089.5px;top:1023.94px;font-size:27px;color:#252423;font-weight:normal;font-style:normal;font-family:'Liberation Sans', sans-serif;letter-spacing:-0.9px">Leeds</span>
<div style="left:10px;top:1051px;width:69px;height:49px;background:#f3f2f1;"></div>
<div style="left:82px;top:1051px;width:397px;height:49px;background:#e6e6e6;"></div>
<div style="left:482px;top:1051px;width:397px;height:49px;background:#ffffff;"></div>
<div style="left:882px;top:1051px;width:397px;height:49px;background:#ffffff;"></div>
<div style="left:1282px;top:1051px;width:397px;height:49px;background:#ffffff;"></div>
<div style="left:1682px;top:1051px;width:397px;height:49px;background:#ffffff;"></div>
<div style="left:2082px;top:1051px;width:245px;height:49px;background:#ffffff;"></div>
<div style="left:10px;top:1100px;width:2317px;height:3px;background:#d2d0ce;"></div>
<div style="left:82px;top:1100px;width:397px;height:3px;background:#d6d6d6;"></div>
<span style="left:36.5px;width:16px;text-align:center;top:1077.60px;font-size:30px;color:#605e5c;font-family:'Liberation Sans', sans-serif">8</span>
<span style="left:89.5px;top:1076.94px;font-size:27px;color:#252423;font-weight:normal;font-style:normal;font-family:'Liberation Sans', sans-serif;letter-spacing:0px">Steph</span>
<span style="left:489.8px;top:1076.94px;font-size:27px;color:#252423;font-weight:normal;font-style:normal;font-family:'Liberation Sans', sans-serif;letter-spacing:0.15px">Manager</span>
<span style="right:1071px;top:1076.94px;font-size:27px;color:#252423;font-weight:normal;font-style:italic;font-family:'Liberation Sans', sans-serif;letter-spacing:1.05px">01/07/2018</span>
<span style="right:673px;top:1076.94px;font-size:27px;color:#252423;font-weight:normal;font-style:italic;font-family:'Liberation Sans', sans-serif;">null</span>
<span style="right:272px;top:1076.94px;font-size:27px;color:#252423;font-weight:normal;font-style:italic;font-family:'Liberation Sans', sans-serif;">32000</span>
<span style="left:2089.5px;top:1076.94px;font-size:27px;color:#252423;font-weight:normal;font-style:normal;font-family:'Liberation Sans', sans-serif;letter-spacing:0.2px">Sheffield</span>
<div style="left:10px;top:1103px;width:69px;height:50px;background:#f3f2f1;"></div>
<div style="left:82px;top:1103px;width:397px;height:50px;background:#e6e6e6;"></div>
<div style="left:482px;top:1103px;width:397px;height:50px;background:#ffffff;"></div>
<div style="left:882px;top:1103px;width:397px;height:50px;background:#ffffff;"></div>
<div style="left:1282px;top:1103px;width:397px;height:50px;background:#ffffff;"></div>
<div style="left:1682px;top:1103px;width:397px;height:50px;background:#ffffff;"></div>
<div style="left:2082px;top:1103px;width:245px;height:50px;background:#ffffff;"></div>
<div style="left:10px;top:1153px;width:2317px;height:3px;background:#d2d0ce;"></div>
<div style="left:82px;top:1153px;width:397px;height:3px;background:#d6d6d6;"></div>
<span style="left:36.5px;width:16px;text-align:center;top:1129.60px;font-size:30px;color:#605e5c;font-family:'Liberation Sans', sans-serif">9</span>
<span style="left:89.5px;top:1128.94px;font-size:27px;color:#252423;font-weight:normal;font-style:normal;font-family:'Liberation Sans', sans-serif;letter-spacing:-1.1px">James</span>
<span style="left:489.8px;top:1128.94px;font-size:27px;color:#252423;font-weight:normal;font-style:normal;font-family:'Liberation Sans', sans-serif;letter-spacing:0.6px">Team Member</span>
<span style="right:1071px;top:1128.94px;font-size:27px;color:#252423;font-weight:normal;font-style:italic;font-family:'Liberation Sans', sans-serif;letter-spacing:1.05px">01/07/2018</span>
<span style="right:671px;top:1128.94px;font-size:27px;color:#252423;font-weight:normal;font-style:italic;font-family:'Liberation Sans', sans-serif;letter-spacing:1.05px">30/06/2019</span>
<span style="right:272px;top:1128.94px;font-size:27px;color:#252423;font-weight:normal;font-style:italic;font-family:'Liberation Sans', sans-serif;">17000</span>
<span style="left:2089.5px;top:1128.94px;font-size:27px;color:#252423;font-weight:normal;font-style:normal;font-family:'Liberation Sans', sans-serif;letter-spacing:0.2px">Sheffield</span>
<div style="left:10px;top:1156px;width:69px;height:49px;background:#f3f2f1;"></div>
<div style="left:82px;top:1156px;width:397px;height:49px;background:#e6e6e6;"></div>
<div style="left:482px;top:1156px;width:397px;height:49px;background:#ffffff;"></div>
<div style="left:882px;top:1156px;width:397px;height:49px;background:#ffffff;"></div>
<div style="left:1282px;top:1156px;width:397px;height:49px;background:#ffffff;"></div>
<div style="left:1682px;top:1156px;width:397px;height:49px;background:#ffffff;"></div>
<div style="left:2082px;top:1156px;width:245px;height:49px;background:#ffffff;"></div>
<div style="left:10px;top:1205px;width:2317px;height:3px;background:#d2d0ce;"></div>
<div style="left:82px;top:1205px;width:397px;height:3px;background:#d6d6d6;"></div>
<span style="left:44.5px;width:16px;text-align:center;top:1182.60px;font-size:30px;color:#605e5c;font-family:'Liberation Sans', sans-serif">0</span>
<svg style="left:0;top:0" width="80" height="1320" viewBox="0 0 80 1320"><path d="M36.60 1171.90 L39.30 1171.90 L39.30 1192.90 L36.60 1192.90 L36.60 1175.70 L31.00 1178.20 L31.00 1175.70Z" fill="#605e5c"/></svg>
<span style="left:89.5px;top:1181.94px;font-size:27px;color:#252423;font-weight:normal;font-style:normal;font-family:'Liberation Sans', sans-serif;letter-spacing:0px">Natalia</span>
<span style="left:489.8px;top:1181.94px;font-size:27px;color:#252423;font-weight:normal;font-style:normal;font-family:'Liberation Sans', sans-serif;letter-spacing:0.6px">Team Member</span>
<span style="right:1071px;top:1181.94px;font-size:27px;color:#252423;font-weight:normal;font-style:italic;font-family:'Liberation Sans', sans-serif;letter-spacing:1.05px">01/09/2018</span>
<span style="right:673px;top:1181.94px;font-size:27px;color:#252423;font-weight:normal;font-style:italic;font-family:'Liberation Sans', sans-serif;">null</span>
<span style="right:272px;top:1181.94px;font-size:27px;color:#252423;font-weight:normal;font-style:italic;font-family:'Liberation Sans', sans-serif;">18000</span>
<span style="left:2089.5px;top:1181.94px;font-size:27px;color:#252423;font-weight:normal;font-style:normal;font-family:'Liberation Sans', sans-serif;letter-spacing:0.2px">Sheffield</span>
<div style="left:10px;top:1208px;width:69px;height:50px;background:#f3f2f1;"></div>
<div style="left:82px;top:1208px;width:397px;height:50px;background:#e6e6e6;"></div>
<div style="left:482px;top:1208px;width:397px;height:50px;background:#ffffff;"></div>
<div style="left:882px;top:1208px;width:397px;height:50px;background:#ffffff;"></div>
<div style="left:1282px;top:1208px;width:397px;height:50px;background:#ffffff;"></div>
<div style="left:1682px;top:1208px;width:397px;height:50px;background:#ffffff;"></div>
<div style="left:2082px;top:1208px;width:245px;height:50px;background:#ffffff;"></div>
<div style="left:10px;top:1258px;width:2317px;height:3px;background:#d2d0ce;"></div>
<div style="left:82px;top:1258px;width:397px;height:3px;background:#d6d6d6;"></div>
<svg style="left:0;top:0" width="80" height="1320" viewBox="0 0 80 1320"><path d="M36.60 1223.90 L39.30 1223.90 L39.30 1244.90 L36.60 1244.90 L36.60 1227.70 L31.00 1230.20 L31.00 1227.70Z" fill="#605e5c"/><path d="M52.60 1223.90 L55.30 1223.90 L55.30 1244.90 L52.60 1244.90 L52.60 1227.70 L47.00 1230.20 L47.00 1227.70Z" fill="#605e5c"/></svg>
<span style="left:89.5px;top:1233.94px;font-size:27px;color:#252423;font-weight:normal;font-style:normal;font-family:'Liberation Sans', sans-serif;letter-spacing:0.6px">Michael</span>
<span style="left:489.8px;top:1233.94px;font-size:27px;color:#252423;font-weight:normal;font-style:normal;font-family:'Liberation Sans', sans-serif;letter-spacing:0.6px">Team Member</span>
<span style="right:1071px;top:1233.94px;font-size:27px;color:#252423;font-weight:normal;font-style:italic;font-family:'Liberation Sans', sans-serif;letter-spacing:1.05px">01/09/2018</span>
<span style="right:671px;top:1233.94px;font-size:27px;color:#252423;font-weight:normal;font-style:italic;font-family:'Liberation Sans', sans-serif;letter-spacing:1.05px">30/11/2018</span>
<span style="right:272px;top:1233.94px;font-size:27px;color:#252423;font-weight:normal;font-style:italic;font-family:'Liberation Sans', sans-serif;">14000</span>
<span style="left:2089.5px;top:1233.94px;font-size:27px;color:#252423;font-weight:normal;font-style:normal;font-family:'Liberation Sans', sans-serif;letter-spacing:0.2px">Sheffield</span>
<div style="left:10px;top:1261px;width:69px;height:49px;background:#f3f2f1;"></div>
<div style="left:82px;top:1261px;width:397px;height:49px;background:#e6e6e6;"></div>
<div style="left:482px;top:1261px;width:397px;height:49px;background:#ffffff;"></div>
<div style="left:882px;top:1261px;width:397px;height:49px;background:#ffffff;"></div>
<div style="left:1282px;top:1261px;width:397px;height:49px;background:#ffffff;"></div>
<div style="left:1682px;top:1261px;width:397px;height:49px;background:#ffffff;"></div>
<div style="left:2082px;top:1261px;width:245px;height:49px;background:#ffffff;"></div>
<div style="left:10px;top:1310px;width:2317px;height:3px;background:#d2d0ce;"></div>
<span style="left:44.5px;width:16px;text-align:center;top:1287.60px;font-size:30px;color:#605e5c;font-family:'Liberation Sans', sans-serif">2</span>
<svg style="left:0;top:0" width="80" height="1320" viewBox="0 0 80 1320"><path d="M36.60 1276.90 L39.30 1276.90 L39.30 1297.90 L36.60 1297.90 L36.60 1280.70 L31.00 1283.20 L31.00 1280.70Z" fill="#605e5c"/></svg>
<span style="left:89.5px;top:1286.94px;font-size:27px;color:#252423;font-weight:normal;font-style:normal;font-family:'Liberation Sans', sans-serif;letter-spacing:-1.0px">Dan</span>
<span style="left:489.8px;top:1286.94px;font-size:27px;color:#252423;font-weight:normal;font-style:normal;font-family:'Liberation Sans', sans-serif;letter-spacing:0.6px">Team Member</span>
<span style="right:1071px;top:1286.94px;font-size:27px;color:#252423;font-weight:normal;font-style:italic;font-family:'Liberation Sans', sans-serif;letter-spacing:1.05px">01/12/2018</span>
<span style="right:673px;top:1286.94px;font-size:27px;color:#252423;font-weight:normal;font-style:italic;font-family:'Liberation Sans', sans-serif;">null</span>
<span style="right:272px;top:1286.94px;font-size:27px;color:#252423;font-weight:normal;font-style:italic;font-family:'Liberation Sans', sans-serif;">21000</span>
<span style="left:2089.5px;top:1286.94px;font-size:27px;color:#252423;font-weight:normal;font-style:normal;font-family:'Liberation Sans', sans-serif;letter-spacing:0.2px">Sheffield</span>
</body></html>
